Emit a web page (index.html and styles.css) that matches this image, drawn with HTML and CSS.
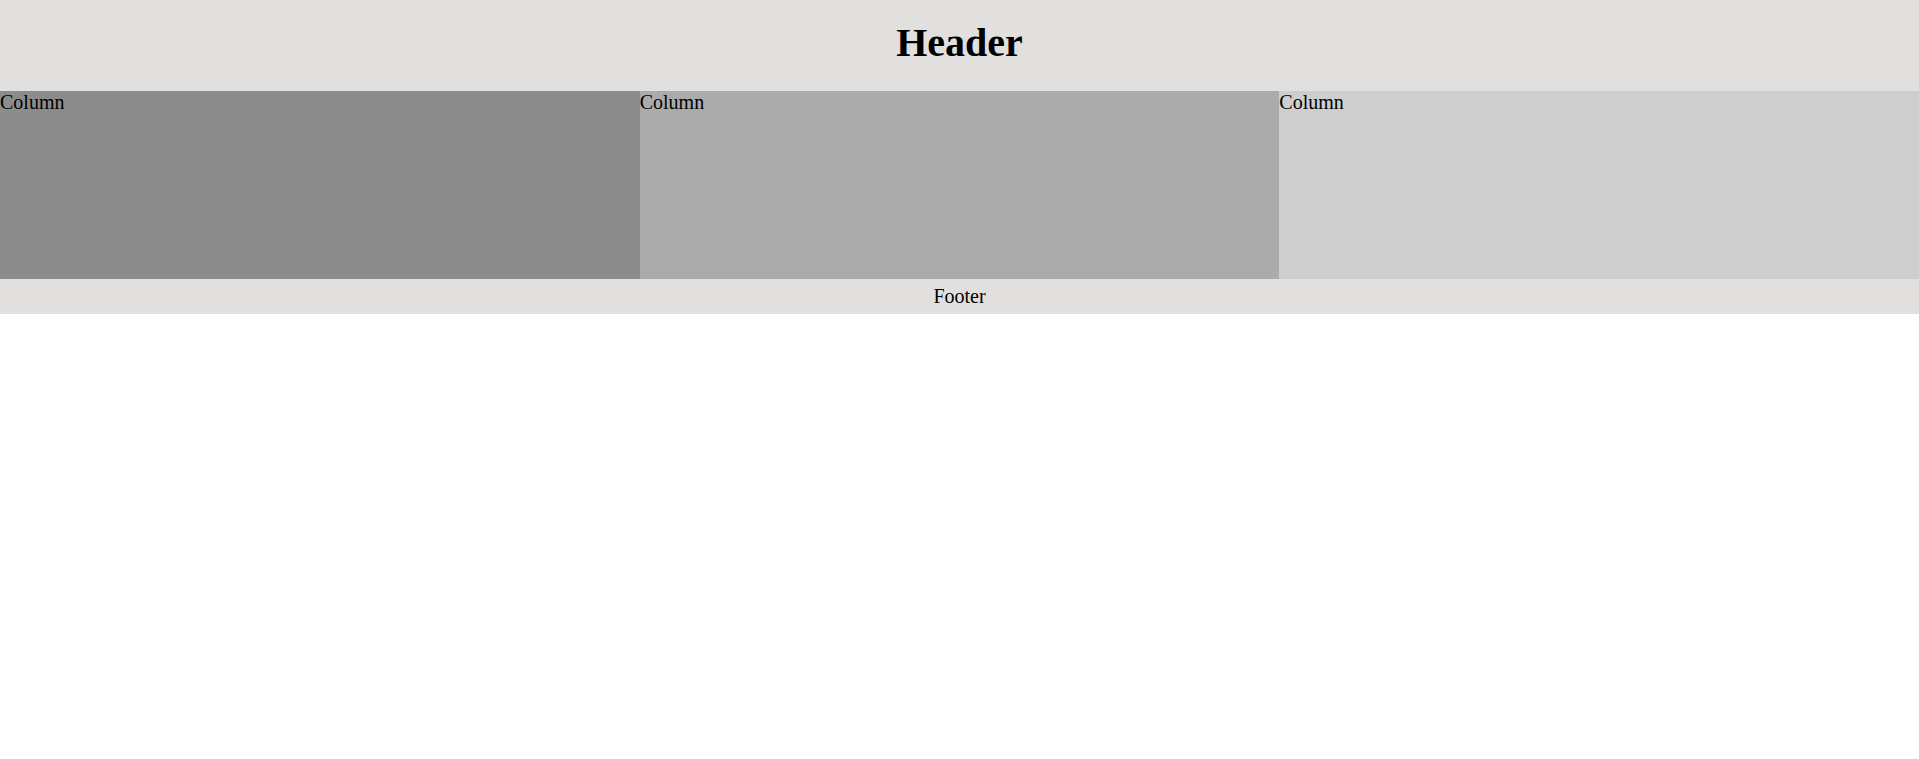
FILE: index.html
```html
<!DOCTYPE html>
<html lang="en">
<head>
    <meta charset="UTF-8">
    <meta name="viewport" content="width=device-width, initial-scale=1.0">
    <title>Three Column Layout</title>
    <link rel="stylesheet" href="styles.css">
</head>
<body>
    <header class="header">
        <h1>Header</h1>
    </header>

    <main class="columns">
        <div class="column column-1">Column</div>
        <div class="column column-2">Column</div>
        <div class="column column-3">Column</div>
    </main>

    <footer class="footer">Footer</footer>
</body>
</html>
```

FILE: styles.css
```css
/* Page basics */
body {
    margin: 0;
    font-family: "Liberation Serif", "Times New Roman", serif;
    font-size: 20px;
    color: #000;
}

/* Header */
.header {
    background-color: #e1e0de;
    text-align: center;
    padding: 20px 0 25px;
}

.header h1 {
    margin: 0;
    font-size: 40px;
    line-height: 46px;
}

/* Three equal columns */
.columns {
    display: flex;
    height: 188px;
}

.column {
    flex: 1;
}

.column-1 {
    background-color: #8c8c8c;
}

.column-2 {
    background-color: #ababab;
}

.column-3 {
    background-color: #cecece;
}

/* Footer */
.footer {
    background-color: #e1e0de;
    text-align: center;
    padding: 6px 0;
    line-height: 23px;
}
```
